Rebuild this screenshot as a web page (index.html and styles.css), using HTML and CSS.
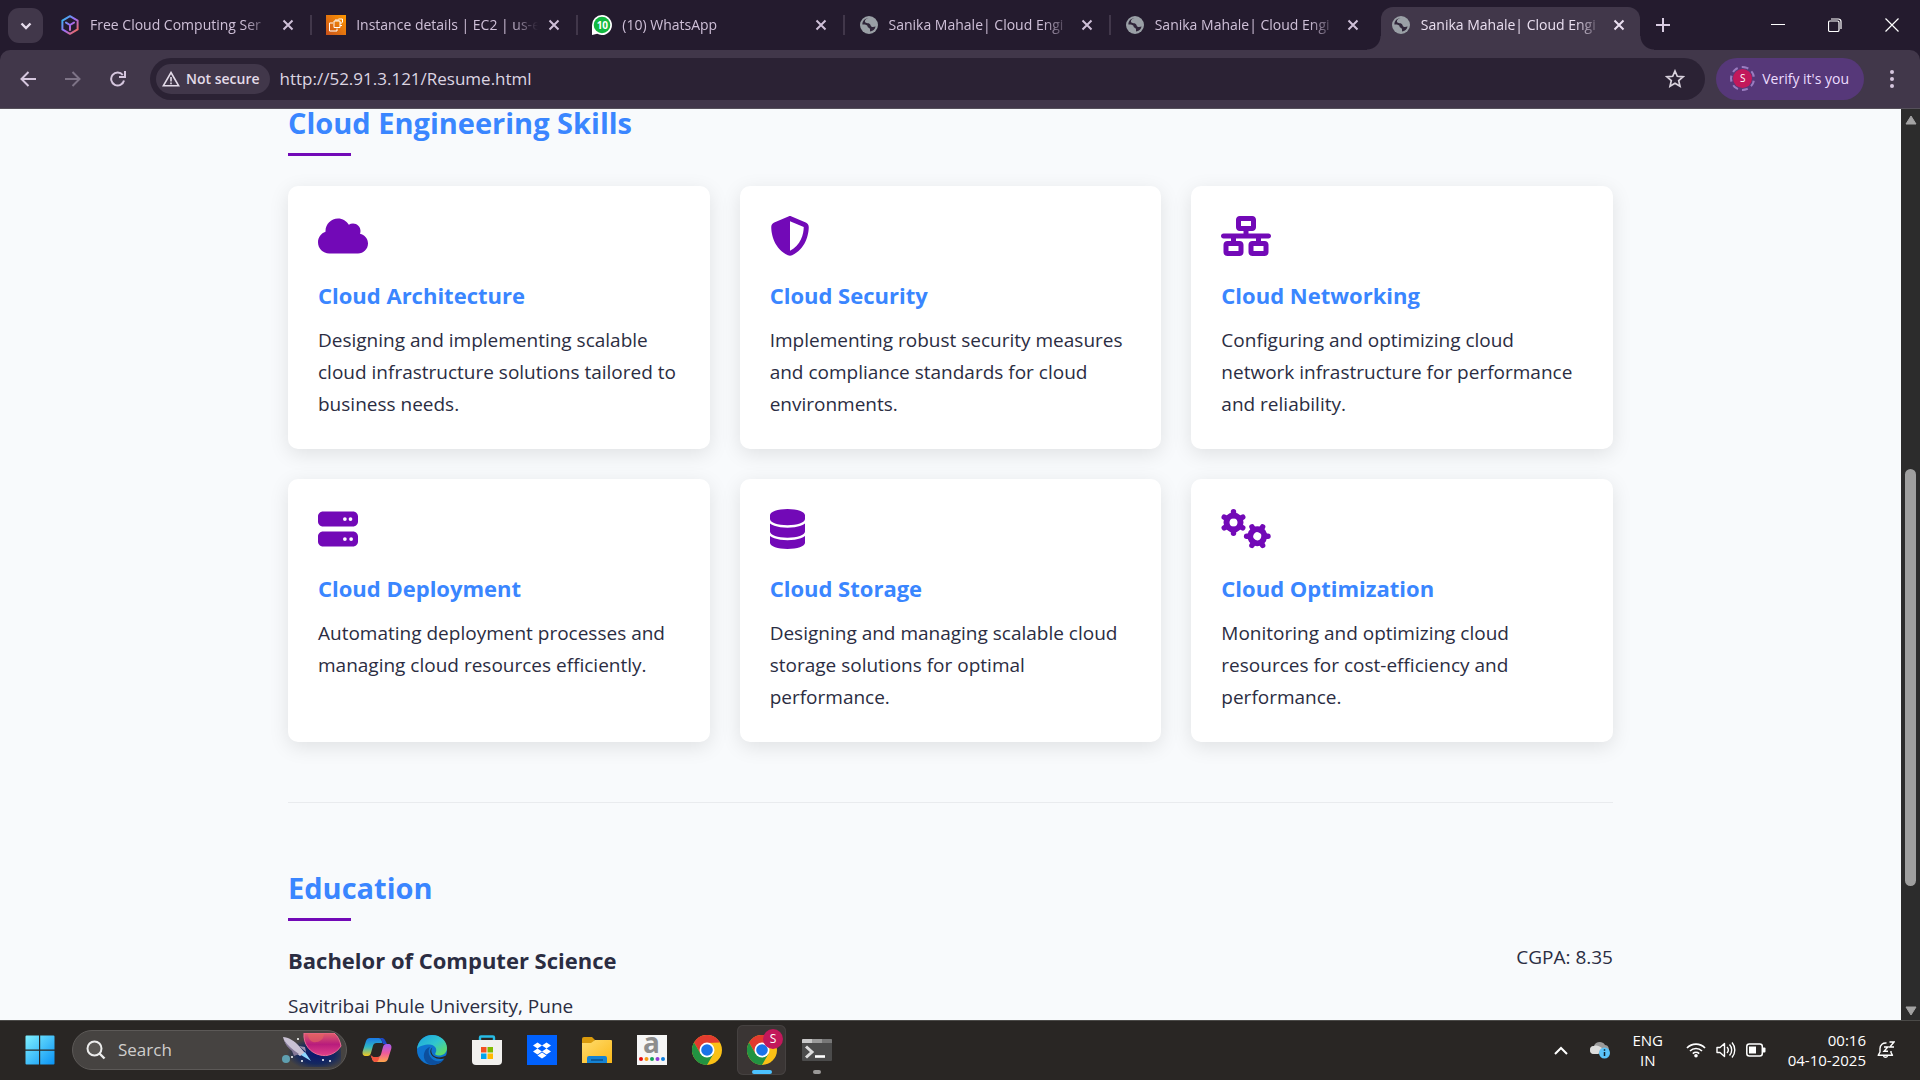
FILE: index.html
```html
<!DOCTYPE html>
<html lang="en">
<head>
<meta charset="utf-8">
<title>Sanika Mahale| Cloud Engineer</title>
<link rel="stylesheet" href="styles.css">
</head>
<body>
<svg class="defs" aria-hidden="true">
  <defs>
    <symbol id="x" viewBox="0 0 12 12"><path d="M1.5 1.5l9 9M10.5 1.5l-9 9" fill="none" stroke="currentColor" stroke-width="2"/></symbol>
    <symbol id="globe" viewBox="0 0 20 20"><circle cx="10" cy="10" r="9" fill="#9aa0a6"/><path d="M9.500 3C7.500 3.800 5.900 4.600 5.900 6.500c0 1.900 3.300 1.300 4.800 2.400 1.400 1 .5 2.300 2 2.800 1.200.4 2.700.1 3.900-.3-.6 2.700-2.800 4.800-5.600 5.200v-2.400c0-1.500-2.500-1-2.500-3.200 0-1.200-3.300-1.900-5.100-1.500C3.200 6.200 6 3.200 9.500 3z" fill="#30263a"/></symbol>
    <symbol id="chrome" viewBox="0 0 30 30">
      <circle cx="15" cy="15" r="15" fill="#fbc116"/>
      <path d="M2 7.500A15 15 0 0 1 28 7.500L15 8 8.500 18.700z" fill="#e33b2e"/>
      <path d="M2 7.500A15 15 0 0 0 15 30l6.500-11.200H8.500z" fill="#229342"/>
      <circle cx="15" cy="15" r="7.500" fill="#fff"/><circle cx="15" cy="15" r="5.800" fill="#1a73e8"/>
    </symbol>
    <path id="tooth" d="M0-7V-10.700" fill="none" stroke="currentColor" stroke-width="5.400" stroke-linecap="round"/>
    <g id="gear"><circle r="7" fill="none" stroke="currentColor" stroke-width="6"/><use href="#tooth"/><use href="#tooth" transform="rotate(60)"/><use href="#tooth" transform="rotate(120)"/><use href="#tooth" transform="rotate(180)"/><use href="#tooth" transform="rotate(240)"/><use href="#tooth" transform="rotate(300)"/></g>
    <linearGradient id="cube" x1="0" y1="0" x2="1" y2="1"><stop offset="0" stop-color="#22c3ee"/><stop offset=".5" stop-color="#a06bf5"/><stop offset="1" stop-color="#ff6a3c"/></linearGradient>
    <linearGradient id="ec2" x1="0" y1="1" x2="1" y2="0"><stop offset="0" stop-color="#c8511b"/><stop offset="1" stop-color="#ff9900"/></linearGradient>
    <linearGradient id="win" x1="0" y1="0" x2="1" y2="1"><stop offset="0" stop-color="#7ff0ff"/><stop offset="1" stop-color="#0a93f5"/></linearGradient>
    <linearGradient id="edgeTop" x1="0" y1="0" x2="1" y2="1"><stop offset="0" stop-color="#1ba0e0"/><stop offset=".5" stop-color="#30c6cf"/><stop offset="1" stop-color="#6be04c"/></linearGradient>
    <linearGradient id="copA" x1="0" y1="0" x2="0" y2="1"><stop offset="0" stop-color="#1a78e6"/><stop offset=".5" stop-color="#2fb8c4"/><stop offset="1" stop-color="#f4c81c"/></linearGradient>
    <linearGradient id="copB" x1="0" y1="0" x2="0" y2="1"><stop offset="0" stop-color="#a35bf0"/><stop offset=".5" stop-color="#ee5a9c"/><stop offset="1" stop-color="#ffa64a"/></linearGradient>
    <linearGradient id="folder" x1="0" y1="0" x2="1" y2="1"><stop offset="0" stop-color="#ffdc6e"/><stop offset="1" stop-color="#fbb818"/></linearGradient>
    <radialGradient id="sky" cx=".6" cy=".6" r=".5"><stop offset="0" stop-color="#0b1470"/><stop offset=".6" stop-color="#14285f"/><stop offset="1" stop-color="#14285f" stop-opacity="0"/></radialGradient>
    <linearGradient id="planet" x1="0" y1="0" x2="0" y2="1"><stop offset="0" stop-color="#e0606a"/><stop offset=".5" stop-color="#b81c7c"/><stop offset="1" stop-color="#e2408a"/></linearGradient>
  </defs>
</svg>

<header class="browser">
  <div class="tabstrip">
    <button class="tabsearch" aria-label="Search tabs"><svg width="12" height="8" viewBox="0 0 12 8"><path d="M1.500 1.500L6 6l4.500-4.500" fill="none" stroke="#e6dcec" stroke-width="2.400"/></svg></button>
    <div class="tabs">
      <div class="tab">
        <svg class="fav" viewBox="0 0 20 20"><path d="M10 1.200l7.600 4.400v8.800L10 18.800l-7.600-4.400V5.600zM6 7.600L10 10l4-2.400M10 10v5" fill="none" stroke="url(#cube)" stroke-width="2" stroke-linejoin="round" stroke-linecap="round"/></svg>
        <span class="title">Free Cloud Computing Ser</span>
        <button class="close" aria-label="Close tab"><svg><use href="#x"/></svg></button>
      </div>
      <div class="tab">
        <svg class="fav" viewBox="0 0 20 20"><path d="M0 0h20v20H0z" fill="url(#ec2)"/><path d="M8 6h6v6.500H8zM10 6V4M12 6V4M16 8h-2M16 10.500h-2M7 8H3.500v8H11v-2.500M12.500 4h4v3.500" fill="none" stroke="#fff" stroke-width="1"/></svg>
        <span class="title">Instance details | EC2 | us-e</span>
        <button class="close" aria-label="Close tab"><svg><use href="#x"/></svg></button>
      </div>
      <div class="tab">
        <span class="fav wa"><svg viewBox="0 0 20 20"><path d="M10 0a10 10 0 1 1-4.800 18.800L0 20V10A10 10 0 0 1 10 0z" fill="#fff"/><circle cx="10" cy="10" r="8.300" fill="#12b940"/></svg><b>10</b></span>
        <span class="title">(10) WhatsApp</span>
        <button class="close" aria-label="Close tab"><svg><use href="#x"/></svg></button>
      </div>
      <div class="tab">
        <svg class="fav"><use href="#globe"/></svg>
        <span class="title">Sanika Mahale| Cloud Engi</span>
        <button class="close" aria-label="Close tab"><svg><use href="#x"/></svg></button>
      </div>
      <div class="tab last">
        <svg class="fav"><use href="#globe"/></svg>
        <span class="title">Sanika Mahale| Cloud Engi</span>
        <button class="close" aria-label="Close tab"><svg><use href="#x"/></svg></button>
      </div>
      <div class="tab active">
        <svg class="fav"><use href="#globe"/></svg>
        <span class="title">Sanika Mahale| Cloud Engi</span>
        <button class="close" aria-label="Close tab"><svg><use href="#x"/></svg></button>
      </div>
    </div>
    <button class="newtab" aria-label="New tab"><svg width="14" height="14" viewBox="0 0 14 14"><path d="M7 0v14M0 7h14" stroke="#d9cce2" stroke-width="2"/></svg></button>
    <div class="winbtns">
      <button aria-label="Minimize"><svg width="14" height="14" viewBox="0 0 14 14"><path d="M0 6.500h14" stroke="#fff"/></svg></button>
      <button aria-label="Restore"><svg width="14" height="14" viewBox="0 0 14 14"><rect x=".5" y="3" width="10.500" height="10.500" rx="1.500" fill="none" stroke="#fff" stroke-width="1.200"/><path d="M3 1h7.500a2.500 2.500 0 0 1 2.500 2.500V11" fill="none" stroke="#fff" stroke-width="1.200"/></svg></button>
      <button aria-label="Close"><svg width="14" height="14" viewBox="0 0 14 14"><path d="M.5.5l13 13M13.500.5l-13 13" stroke="#fff" stroke-width="1.200"/></svg></button>
    </div>
  </div>
  <div class="toolbar">
    <div class="nav">
      <button aria-label="Back"><svg width="16" height="16" viewBox="0 0 16 16"><path d="M16 8H1.500M8.500 1L1.500 8l7 7" fill="none" stroke="#d5c6de" stroke-width="2"/></svg></button>
      <button aria-label="Forward"><svg width="16" height="16" viewBox="0 0 16 16"><path d="M0 8h14.500M7.500 1l7 7-7 7" fill="none" stroke="#7d7386" stroke-width="2"/></svg></button>
      <button aria-label="Reload"><svg width="16" height="16" viewBox="0 0 16 16"><path d="M14 9.500A6.500 6.500 0 1 1 12.800 4M15 0v6H9" fill="none" stroke="#d5c6de" stroke-width="2"/></svg></button>
    </div>
    <div class="omnibox">
      <button class="chip"><svg width="18" height="16" viewBox="0 0 18 16"><path d="M9 1.500l7.700 13.300H1.300z" fill="none" stroke="#e3dbe8" stroke-width="1.600"/><path d="M9 6v4.500M9 11.500v1.800" stroke="#e3dbe8" stroke-width="1.600"/></svg>Not secure</button>
      <input class="url" type="text" aria-label="Address" value="http://52.91.3.121/Resume.html">
      <button class="star" aria-label="Bookmark"><svg width="20" height="20" viewBox="0 0 20 20"><path d="M10 2l2.300 5.300 5.700.5-4.300 3.800 1.300 5.600-5-3-5 3 1.300-5.600L2 7.800l5.700-.5z" fill="none" stroke="#d9d2dd" stroke-width="1.700"/></svg></button>
    </div>
    <button class="verify"><span class="avatar">S</span>Verify it's you</button>
    <button class="menu" aria-label="Menu"><svg width="4" height="18" viewBox="0 0 4 18"><g fill="#d5c6de"><circle cx="2" cy="2" r="2"/><circle cx="2" cy="9" r="2"/><circle cx="2" cy="16" r="2"/></g></svg></button>
  </div>
</header>

<div class="viewport">
  <main class="page">
    <section class="section">
      <h2>Cloud Engineering Skills</h2>
      <div class="cards">
        <article class="card">
          <svg viewBox="0 0 640 512" width="50" height="40"><path d="M0 336c0 79.500 64.500 144 144 144l368 0c70.700 0 128-57.300 128-128c0-61.900-44-113.600-102.400-125.400c4.100-10.700 6.400-22.400 6.400-34.600c0-53-43-96-96-96c-19.700 0-38.100 6-53.300 16.200C367 64.200 315.300 32 256 32C167.600 32 96 103.600 96 192c0 2.700 .1 5.400 .2 8.100C40.200 219.800 0 273.200 0 336z"/></svg>
          <h3>Cloud Architecture</h3>
          <p>Designing and implementing scalable cloud infrastructure solutions tailored to business needs.</p>
        </article>
        <article class="card">
          <svg viewBox="0 0 512 512" width="40" height="40"><path d="M256 0c4.600 0 9.200 1 13.400 2.900L457.700 82.800c22 9.300 38.400 31 38.300 57.200c-.5 99.200-41.300 280.700-213.600 363.200c-16.700 8-36.100 8-52.800 0C57.300 420.700 16.500 239.200 16 140c-.1-26.200 16.300-47.900 38.300-57.200L242.700 2.900C246.800 1 251.400 0 256 0zm0 66.800l0 378.100C394 378 431.100 230.100 432 141.400L256 66.800z"/></svg>
          <h3>Cloud Security</h3>
          <p>Implementing robust security measures and compliance standards for cloud environments.</p>
        </article>
        <article class="card">
          <svg viewBox="0 0 640 512" width="50" height="40"><path d="M256 64l128 0 0 64-128 0 0-64zM240 0c-26.500 0-48 21.500-48 48l0 96c0 26.500 21.500 48 48 48l48 0 0 32L32 224c-17.700 0-32 14.300-32 32s14.300 32 32 32l96 0 0 32-48 0c-26.500 0-48 21.500-48 48l0 96c0 26.500 21.500 48 48 48l160 0c26.500 0 48-21.500 48-48l0-96c0-26.500-21.500-48-48-48l-48 0 0-32 256 0 0 32-48 0c-26.500 0-48 21.500-48 48l0 96c0 26.500 21.500 48 48 48l160 0c26.500 0 48-21.500 48-48l0-96c0-26.500-21.500-48-48-48l-48 0 0-32 96 0c17.700 0 32-14.300 32-32s-14.300-32-32-32l-256 0 0-32 48 0c26.500 0 48-21.500 48-48l0-96c0-26.500-21.500-48-48-48L240 0zM96 448l0-64 128 0 0 64L96 448zm320-64l128 0 0 64-128 0 0-64z"/></svg>
          <h3>Cloud Networking</h3>
          <p>Configuring and optimizing cloud network infrastructure for performance and reliability.</p>
        </article>
        <article class="card">
          <svg viewBox="0 0 512 512" width="40" height="40"><path d="M64 32C28.700 32 0 60.700 0 96l0 64c0 35.300 28.700 64 64 64l384 0c35.300 0 64-28.700 64-64l0-64c0-35.300-28.700-64-64-64L64 32zm280 72a24 24 0 1 1 0 48 24 24 0 1 1 0-48zm48 24a24 24 0 1 1 48 0 24 24 0 1 1 -48 0zM64 288c-35.300 0-64 28.700-64 64l0 64c0 35.300 28.700 64 64 64l384 0c35.300 0 64-28.700 64-64l0-64c0-35.300-28.700-64-64-64L64 288zm280 72a24 24 0 1 1 0 48 24 24 0 1 1 0-48zm56 24a24 24 0 1 1 48 0 24 24 0 1 1 -48 0z"/></svg>
          <h3>Cloud Deployment</h3>
          <p>Automating deployment processes and managing cloud resources efficiently.</p>
        </article>
        <article class="card">
          <svg viewBox="0 0 448 512" width="35" height="40"><path d="M448 80l0 48c0 44.200-100.300 80-224 80S0 172.200 0 128L0 80C0 35.800 100.300 0 224 0S448 35.800 448 80zM393.200 214.700c20.800-7.400 39.900-16.900 54.800-28.600L448 288c0 44.200-100.300 80-224 80S0 332.200 0 288L0 186.100c14.900 11.800 34 21.200 54.800 28.600C99.700 230.700 159.500 240 224 240s124.300-9.300 169.200-25.300zM0 346.100c14.900 11.800 34 21.200 54.800 28.600C99.700 390.700 159.500 400 224 400s124.300-9.300 169.200-25.300c20.800-7.400 39.900-16.900 54.800-28.600l0 85.900c0 44.200-100.300 80-224 80S0 476.200 0 432l0-85.900z"/></svg>
          <h3>Cloud Storage</h3>
          <p>Designing and managing scalable cloud storage solutions for optimal performance.</p>
        </article>
        <article class="card">
          <svg viewBox="0 0 50 40" width="50" height="40"><use href="#gear" transform="translate(12.500 13.500)"/><use href="#gear" transform="translate(36.300 27.200) rotate(30)"/></svg>
          <h3>Cloud Optimization</h3>
          <p>Monitoring and optimizing cloud resources for cost-efficiency and performance.</p>
        </article>
      </div>
    </section>
    <section class="section education">
      <h2>Education</h2>
      <div class="entry">
        <div class="entry-main">
          <h3>Bachelor of Computer Science</h3>
          <p>Savitribai Phule University, Pune</p>
        </div>
        <p>CGPA: 8.35</p>
      </div>
    </section>
  </main>
  <div class="scrollbar">
    <svg width="12" height="10" viewBox="0 0 12 10"><path d="M6 1l5 8H1z" fill="#a3a3a3" stroke="#a3a3a3" stroke-linejoin="round"/></svg>
    <div class="track"><div class="thumb"></div></div>
    <svg width="12" height="10" viewBox="0 0 12 10"><path d="M6 9L1 1h10z" fill="#a3a3a3" stroke="#a3a3a3" stroke-linejoin="round"/></svg>
  </div>
</div>

<footer class="taskbar">
  <div class="apps">
    <button class="start" aria-label="Start"><svg width="30" height="30" viewBox="0 0 30 30"><path d="M1.500.5H14v14H.5v-13a1 1 0 0 1 1-1zM15.200.5h13.300a1 1 0 0 1 1 1v13H15.200zM.5 15.700H14v13.800H1.500a1 1 0 0 1-1-1zM15.200 15.700h14.300v12.800a1 1 0 0 1-1 1H15.200z" fill="url(#win)"/></svg></button>
    <label class="search">
      <svg width="20" height="20" viewBox="0 0 20 20"><circle cx="8.500" cy="8.500" r="7" fill="#5a5754" stroke="#ececec" stroke-width="2"/><path d="M13.500 13.500l5 5" stroke="#ececec" stroke-width="2.400"/></svg>
      <input type="search" placeholder="Search" aria-label="Search">
      <svg width="62" height="34" viewBox="0 0 62 34">
        <path d="M0 34V6C12 0 50 0 60 10V34z" fill="url(#sky)"/>
        <path d="M23 0h30c4 3 6 8 7 13-5 8-14 11-21 9C29 20 22 11 23 0z" fill="url(#planet)" stroke="#ee6a92"/>
        <path d="M27 1h16c0 6-6 9-11 8-3-1-5-4-5-8z" fill="#e4665f" opacity=".6"/>
        <circle cx="5" cy="26" r="4" fill="#5f9fb0"/>
        <path d="M2 4c5 0 12 4 16 9l6 7-5 3-7-5C7 14 3 9 2 4z" fill="#c9c1d3"/><path d="M3 7c3 5 8 9 15 14l-5 2-2-5C7 15 4 11 3 7z" fill="#837797"/><path d="M18 13l6 1 1 5z" fill="#9c90ac"/>
        <path d="M20 22l4-3 6 9z" fill="#8ed6ff"/>
        <g fill="#fff"><circle cx="17" cy="6" r="1"/><circle cx="42" cy="27" r="1"/><circle cx="49" cy="28" r="1"/><circle cx="21" cy="28" r="1"/><circle cx="11" cy="24" r="1"/></g>
      </svg>
    </label>
    <button class="app" aria-label="Copilot"><svg width="30" height="30" viewBox="0 0 30 30"><path d="M8 3h8c3 0 3.500 2 4.500 5h-6c-2 0-3 1-3.600 3L9 18c-.6 2-1.500 3-3.500 3H4c-3 0-4-2-3.200-5L4 6c.7-2 2-3 4-3z" fill="url(#copA)"/><path d="M16 3c3 0 4 2 5 6h4l-2-4c-1-1.500-2-2-3-2z" fill="#1d49c9"/><path d="M22 27h-8c-3 0-3.500-2-4.500-5h6c2 0 3-1 3.600-3L21 12c.6-2 1.500-3 3.500-3H26c3 0 4 2 3.200 5L26 24c-.7 2-2 3-4 3z" fill="url(#copB)"/><path d="M8.500 20l2 5c.7 1.500 2 2 3.500 2 2 0 2.500-2 3.500-5h-6z" fill="#f2543f"/></svg></button>
    <button class="app" aria-label="Edge"><svg width="30" height="30" viewBox="0 0 30 30"><circle cx="15" cy="15" r="15" fill="#0f73cf"/><path d="M0 14C1 5.500 7.500 0 15 0c9 0 15 6.500 15 13 0 5-4 7.500-8 7.500-3 0-4.500-1-3.500-2.500 2.500-4-1-8.500-6-8.500C7 9.500 2 11 0 14z" fill="url(#edgeTop)"/><path d="M13 12c-3 4-1 12 6 14 4 1 7-.5 9-3-3 5-8 7-13 7C8 29 5 22 8 16c1-2 3-3.600 5-4z" fill="#0c4f9e"/><path d="M15.500 12.500c-2 2-1.500 6 1.500 8.500 3 2 8 2 13-1l0 3-2 .5c-4 1-9 .5-12-2-3.500-3-3.500-7-.5-9z" fill="#292624"/></svg></button>
    <button class="app" aria-label="Microsoft Store"><svg width="30" height="30" viewBox="0 0 30 30"><path d="M8 8V2.500a1 1 0 0 1 1-1h12a1 1 0 0 1 1 1V8" fill="none" stroke="#27bce5" stroke-width="2.400"/><path d="M0 5h30v21a4 4 0 0 1-4 4H4a4 4 0 0 1-4-4z" fill="#f1f0ee"/><path d="M9 12h5.500v5.500H9z" fill="#f25022"/><path d="M15.500 12H21v5.500h-5.500z" fill="#7fba00"/><path d="M9 18.500h5.500V24H9z" fill="#00a4ef"/><path d="M15.500 18.500H21V24h-5.500z" fill="#ffb900"/></svg></button>
    <button class="app" aria-label="Dropbox"><svg width="30" height="30" viewBox="0 0 30 30"><path d="M0 0h30v30H0z" fill="#0061fe"/><path d="M10.500 7.500l4.500 3-4.500 3-4.500-3zM19.500 7.500l4.500 3-4.500 3-4.500-3zM10.500 13.500l4.500 3-4.500 3-4.500-3zM19.500 13.500l4.500 3-4.500 3-4.500-3zM15 17.500l4.500 3-4.500 3-4.500-3z" fill="#fff"/></svg></button>
    <button class="app" aria-label="File Explorer"><svg width="30" height="30" viewBox="0 0 30 30"><path d="M0 4a2 2 0 0 1 2-2h8l3 3-2 3H0z" fill="#d99a0c"/><path d="M0 8h9l4-3h16a1 1 0 0 1 1 1v22H0z" fill="url(#folder)"/><path d="M5 28v-5a2 2 0 0 1 2-2h16a2 2 0 0 1 2 2v5z" fill="#1583d4"/><path d="M9 25h12" stroke="#0a4f8c" stroke-width="1.500"/></svg></button>
    <button class="app" aria-label="Amazon"><span class="amazon"><b>a</b><svg width="28" height="4" viewBox="0 0 28 4"><circle cx="3" cy="2" r="2" fill="#e80d0d"/><circle cx="8.500" cy="2" r="2" fill="#f59b15"/><circle cx="14" cy="2" r="2" fill="#14a05a"/><circle cx="19.500" cy="2" r="2" fill="#8f3bd6"/><circle cx="25" cy="2" r="2" fill="#0d7fe0"/></svg></span></button>
    <button class="app" aria-label="Chrome"><svg width="30" height="30"><use href="#chrome"/></svg></button>
    <button class="app current" aria-label="Chrome, profile S"><svg width="30" height="30"><use href="#chrome"/></svg><span class="badge">S</span><i class="ind"></i></button>
    <button class="app running" aria-label="Terminal"><svg width="30" height="30" viewBox="0 0 30 30"><path d="M0 5a1 1 0 0 1 1-1h28a1 1 0 0 1 1 1v20a1 1 0 0 1-1 1H1a1 1 0 0 1-1-1z" fill="#4b4b4b"/><path d="M0 8V5a1 1 0 0 1 1-1h9v4z" fill="#c8c8c8"/><path d="M10 4h10v4H10z" fill="#9a9a9a"/><path d="M20 4h9a1 1 0 0 1 1 1v3H20z" fill="#777"/><path d="M4 11.500l6 5.500-6 5.500" fill="none" stroke="#dcdcdc" stroke-width="3"/><path d="M13 21.500h10" stroke="#fff" stroke-width="2.600"/></svg><i class="ind"></i></button>
  </div>
  <div class="tray">
    <button aria-label="Show hidden icons"><svg width="14" height="9" viewBox="0 0 14 9"><path d="M1 8l6-6 6 6" fill="none" stroke="#fff" stroke-width="2"/></svg></button>
    <button aria-label="OneDrive"><svg width="20" height="18" viewBox="0 0 20 18"><path d="M4 13a4 4 0 0 1 0-8C5 1 12-1 15 4c3 0 4 3 4 5v4z" fill="#9b9b9b"/><path d="M4 13a4 4 0 0 1 0-8c3-1 5 0 8 2l-4 6z" fill="#dcdcdc"/><circle cx="14.500" cy="12" r="5.500" fill="#5ac3f8"/><path d="M14.500 11v4M14.500 8.300v1.500" stroke="#10222e" stroke-width="1.500"/></svg></button>
    <button class="lang">ENG<br>IN</button>
    <button class="status" aria-label="Network, volume, battery">
      <svg width="20" height="16" viewBox="0 0 20 16"><path d="M1 6a12.500 12.500 0 0 1 18 0M4 9a8.500 8.500 0 0 1 12 0M6.800 11.700a4.700 4.700 0 0 1 6.400 0" fill="none" stroke="#fff" stroke-width="1.700"/><circle cx="10" cy="13.800" r="1.800" fill="#fff"/></svg>
      <svg width="20" height="18" viewBox="0 0 20 18"><path d="M1 6.500h3l4.500-4v13l-4.500-4H1z" fill="none" stroke="#fff" stroke-width="1.400" stroke-linejoin="round"/><path d="M11 6a4.500 4.500 0 0 1 0 6M13.500 3.500a8 8 0 0 1 0 11M16 1.500a11.500 11.500 0 0 1 0 15" fill="none" stroke="#fff" stroke-width="1.400"/></svg>
      <svg width="20" height="14" viewBox="0 0 20 14"><rect x=".8" y="1" width="15.500" height="12" rx="2.500" fill="none" stroke="#fff" stroke-width="1.500"/><path d="M3 3.500h7v7H3z" fill="#fff"/><path d="M17 4.500h1.500a1 1 0 0 1 1 1v3a1 1 0 0 1-1 1H17z" fill="#fff"/></svg>
    </button>
    <button class="clock"><span>00:16<br>04-10-2025</span><svg width="18" height="18" viewBox="0 0 18 18"><path d="M9.500 2C6 1.500 3 4 3 7.500V11l-1.800 3.300h14.300L14 11.500V10M6.500 15a2.200 2.200 0 0 0 4 0" fill="none" stroke="#fff" stroke-width="1.400" stroke-linejoin="round"/><path d="M7 6h3.800L7 10.300h4M12.500 1H17l-4.200 5H17" fill="none" stroke="#fff" stroke-width="1.400"/></svg></button>
  </div>
</footer>
</body>
</html>
```
FILE: styles.css
```css
* { box-sizing: border-box; margin: 0; padding: 0; }

body {
  height: 100vh;
  display: flex;
  flex-direction: column;
  overflow: hidden;
  font-family: "Open Sans", "Noto Sans", sans-serif;
  font-size: 19px;
  line-height: 32px;
  color: #2b2d42;
}

button, input {
  font: inherit;
  color: inherit;
  background: none;
  border: 0;
  outline: 0;
}

svg { display: block; flex: none; }
.defs { position: absolute; width: 0; height: 0; }

/* Tab strip */
.browser { flex: none; background: #241b2e; font-size: 14px; line-height: 20px; }

.tabstrip { display: flex; height: 50px; padding-left: 8px; }

.tabsearch {
  display: flex;
  align-items: center;
  justify-content: center;
  width: 35px;
  height: 35px;
  margin: 8px 3px 0 0;
  border-radius: 11px;
  background: #41374a;
}

.tabs { display: flex; flex: 0 1 1598px; min-width: 0; }

.tab {
  position: relative;
  display: flex;
  flex: 1 1 0;
  min-width: 0;
  align-items: center;
  gap: 10px;
  padding: 0 18px 0 14px;
  color: #cfc0d8;
}
.tab::after {
  content: "";
  position: absolute;
  right: 0;
  top: 15px;
  width: 2px;
  height: 20px;
  background: #41374a;
}
.tab.last::after { display: none; }
.tab.active {
  margin: 7px 4px 0;
  padding: 0 15px 7px 10px;
  border-radius: 12px 12px 0 0;
  background: #41374a;
  color: #eadff0;
}
.tab.active::before, .tab.active::after {
  content: "";
  position: absolute;
  top: auto;
  bottom: 0;
  width: 14px;
  height: 14px;
}
.tab.active::before {
  left: -14px;
  background: radial-gradient(circle at 0 0, transparent 13px, #41374a 14px);
}
.tab.active::after {
  right: -14px;
  background: radial-gradient(circle at 100% 0, transparent 13px, #41374a 14px);
}

.fav { width: 20px; height: 20px; flex: none; }
.wa { display: grid; place-items: center; font-size: 10px; line-height: 20px; color: #fff; }
.wa svg, .wa b { grid-area: 1 / 1; }

.title {
  flex: 1;
  min-width: 0;
  overflow: hidden;
  white-space: nowrap;
  mask-image: linear-gradient(to right, #000 calc(100% - 28px), transparent);
}
.close { display: flex; justify-content: flex-end; width: 12px; }
.close svg { width: 12px; height: 12px; }

.newtab { width: 38px; margin-right: auto; display: flex; align-items: center; justify-content: center; }
.winbtns { display: flex; }
.winbtns button { width: 57px; display: flex; align-items: center; justify-content: center; }

/* Toolbar */
.toolbar {
  display: flex;
  align-items: center;
  height: 59px;
  padding: 0 11px 1px 5px;
  border-bottom: 1px solid #55505a;
  border-radius: 10px 10px 0 0;
  background: #41374a;
}
.nav { display: flex; margin-right: 10px; }
.nav button { width: 45px; height: 40px; display: flex; align-items: center; justify-content: center; }

.omnibox {
  display: flex;
  flex: 1;
  align-items: center;
  height: 42px;
  padding: 0 20px 0 6px;
  border-radius: 21px;
  background: #2b2234;
}
.chip {
  display: flex;
  align-items: center;
  gap: 6px;
  height: 30px;
  padding: 0 10px 0 6px;
  border-radius: 15px;
  background: #41374a;
  color: #e3dbe8;
  font-weight: 600;
}
.url { flex: 1; margin-left: 10px; font-size: 17px; line-height: 24px; color: #ddd5e2; }

.verify {
  display: flex;
  align-items: center;
  gap: 7px;
  height: 42px;
  margin: 0 11px;
  padding: 0 15px 0 14px;
  border-radius: 21px;
  background: #563879;
  color: #eddcff;
}
.avatar {
  width: 25px;
  height: 25px;
  border: 2px dashed #9a7cc0;
  border-radius: 50%;
  background: #c2185b content-box;
  padding: 1px;
  font-size: 10px;
  line-height: 19px;
  color: #fff;
}
.menu { width: 34px; height: 40px; display: flex; align-items: center; justify-content: center; }

/* Web page */
.viewport { flex: 1; min-height: 0; display: flex; overflow: hidden; background: #f8fafc; }

/* The page is scrolled so its first heading touches the top edge. */
.page { flex: 1; max-width: 1325px; margin: -11px auto 0; }

.section { padding-bottom: 60px; }
.education { padding-top: 60px; border-top: 1px solid #e9ebee; }

h2 {
  font-size: 29px;
  line-height: 50px;
  color: #3a86ff;
  padding-bottom: 8px;
  margin-bottom: 30px;
  background: linear-gradient(#7209b7, #7209b7) left bottom / 63px 3px no-repeat;
}
.education h2 { margin-bottom: 20px; }
h3 { font-size: 22px; line-height: 38px; }

.cards { display: grid; grid-template-columns: repeat(3, 1fr); gap: 30px; }
.card {
  padding: 30px 30px 29px;
  border-radius: 10px;
  background: #fff;
  box-shadow: 0 5px 20px rgba(0, 0, 0, 0.1);
}
.card svg { margin-bottom: 20px; fill: #7209b7; color: #7209b7; }
.card h3 { margin-bottom: 10px; color: #3a86ff; }

.entry { display: flex; justify-content: space-between; }
.entry-main { display: flex; flex-direction: column; gap: 11px; }

.scrollbar {
  display: flex;
  flex-direction: column;
  align-items: center;
  width: 19px;
  padding: 6px 0 4px;
  background: #2c2c2c;
}
.track { flex: 1; align-self: stretch; display: flex; padding: 344px 4px 0; }
.thumb { flex: 1; height: 417px; border-radius: 6px; background: #9f9f9f; }

/* Taskbar */
.taskbar {
  flex: none;
  display: flex;
  justify-content: space-between;
  height: 60px;
  padding-bottom: 1px;
  border-top: 1px solid #4b4a48;
  background: #292624;
  color: #fff;
}
.apps, .tray { display: flex; align-items: center; }
.apps { padding-left: 25px; }

.search {
  display: flex;
  align-items: center;
  gap: 12px;
  width: 275px;
  height: 40px;
  margin: 0 5px 0 17px;
  padding: 0 3px 0 13px;
  border: 1px solid #5c5957;
  border-radius: 20px;
  background: #464341;
}
.search input { flex: 1; min-width: 0; font-size: 17px; line-height: 24px; }
.search input::placeholder { color: #d0cecd; opacity: 1; }

.app {
  position: relative;
  display: flex;
  align-items: center;
  justify-content: center;
  width: 49px;
  height: 50px;
  margin-right: 6px;
  border-radius: 6px;
}
.app.current { background: #3a3534; box-shadow: inset 0 0 0 1px #454140; }
.badge {
  position: absolute;
  top: 4px;
  right: 3px;
  width: 20px;
  height: 20px;
  border-radius: 50%;
  background: #c2185b;
  font-size: 12px;
  line-height: 20px;
}
.ind {
  position: absolute;
  bottom: 1px;
  left: 50%;
  width: 8px;
  height: 4px;
  margin-left: -4px;
  border-radius: 2px;
  background: #9a9897;
}
.current .ind { width: 20px; margin-left: -10px; background: #4cc2ff; }

.amazon {
  display: flex;
  flex-direction: column;
  align-items: center;
  width: 30px;
  height: 30px;
  background: #f6f6f6;
  color: #8d8d8d;
  font-size: 28px;
  line-height: 22px;
}
.amazon b { height: 22px; display: flex; align-items: flex-end; padding-bottom: 4px; }

.tray { gap: 22px; padding-right: 25px; font-size: 15px; line-height: 20px; }
.status { display: flex; align-items: center; gap: 10px; }
.lang { width: 32px; text-align: center; }
.clock { display: flex; align-items: center; gap: 11px; text-align: right; }
```
